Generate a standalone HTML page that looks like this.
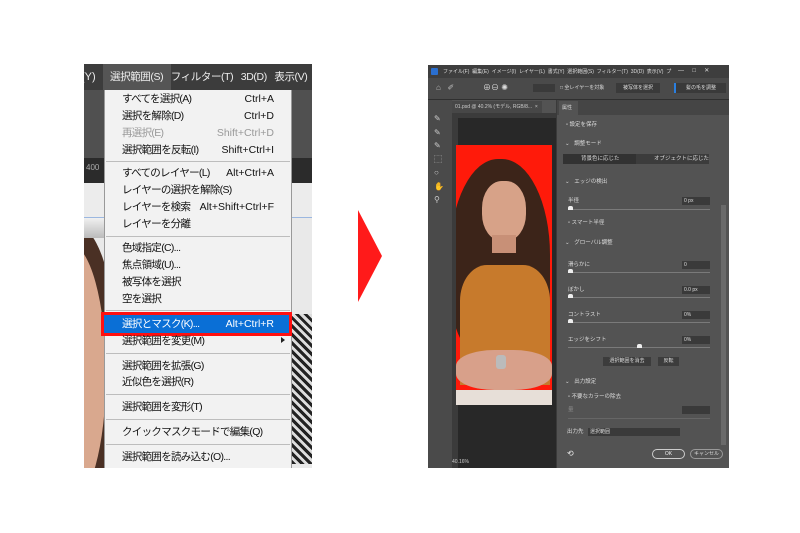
<!DOCTYPE html>
<html><head><meta charset="utf-8"><style>
*{margin:0;padding:0;box-sizing:border-box}
body{width:800px;height:533px;background:#fff;position:relative;overflow:hidden;font-family:"Liberation Sans","Noto Sans CJK JP",sans-serif}
.a{position:absolute}
.mi{position:absolute;left:122px;font-size:10.5px;letter-spacing:-0.7px;color:#111;white-space:nowrap;line-height:13px}
.sc{position:absolute;right:526px;font-size:10.5px;color:#111;white-space:nowrap;line-height:13px}
.sep{position:absolute;left:106px;width:184px;height:1px;background:#bdbdbd}
.t{position:absolute;font-size:5.5px;color:#ddd;white-space:nowrap;line-height:7px}
.fld{position:absolute;background:#3a3a3a;height:8px;font-size:5px;color:#ddd;padding-left:2px;line-height:8px}
.sl{position:absolute;left:568px;width:142px;height:1px;background:#7a7a7a}
.kn{position:absolute;width:5px;height:4px;background:#eee;border-radius:2px 2px 0 0}
</style></head><body>
<!-- LEFT SCREENSHOT -->
<div class="a" style="left:84px;top:64px;width:228px;height:404px;background:#e9e9e9;overflow:hidden">
  <div class="a" style="left:0;top:0;width:228px;height:26px;background:#3c3c3c"></div>
  <div class="a" style="left:0;top:26px;width:228px;height:68px;background:#505050"></div>
  <div class="a" style="left:0;top:94px;width:228px;height:25px;background:#2b2b2b"></div>
  <div class="a" style="left:2px;top:99px;font-size:8px;color:#aaa">400</div>
  <div class="a" style="left:0;top:119px;width:228px;height:34px;background:#ececec"></div>
  <div class="a" style="left:0;top:153px;width:228px;height:1px;background:#9bb7e0"></div>
  <!-- face on left -->
  <div class="a" style="left:-70px;top:160px;width:100px;height:280px;border-radius:45% 40% 30% 30%;background:#4a3024"></div>
  <div class="a" style="left:-50px;top:180px;width:72px;height:260px;border-radius:50%;background:#d9a88e"></div>
  <div class="a" style="left:0;top:154px;width:30px;height:20px;background:linear-gradient(#f0f0f0,#bbb)"></div>
  <div class="a" style="left:208px;top:250px;width:20px;height:150px;background:repeating-linear-gradient(45deg,#222 0 3px,#ddd 3px 6px)"></div>
  <div class="a" style="left:-3px;top:0;font-size:11px;color:#eee;line-height:26px">(Y)</div>
  <div class="a" style="left:19px;top:0;width:68px;height:26px;background:#555"></div>
  <div class="a" style="left:26px;top:0;font-size:10.5px;letter-spacing:-0.4px;color:#eee;line-height:26px;white-space:nowrap">選択範囲(S)&nbsp;&nbsp;&nbsp;フィルター(T)&nbsp;&nbsp;&nbsp;3D(D)&nbsp;&nbsp;&nbsp;表示(V)</div>
</div>
<!-- menu -->
<div class="a" style="left:104px;top:90px;width:188px;height:378px;background:#f2f2f2;border-left:1px solid #999;border-right:1px solid #999"></div>
<div class="mi" style="top:93px">すべてを選択(A)</div><div class="sc" style="top:93px">Ctrl+A</div>
<div class="mi" style="top:110px">選択を解除(D)</div><div class="sc" style="top:110px">Ctrl+D</div>
<div class="mi" style="top:127px;color:#999">再選択(E)</div><div class="sc" style="top:127px;color:#999">Shift+Ctrl+D</div>
<div class="mi" style="top:144px">選択範囲を反転(I)</div><div class="sc" style="top:144px">Shift+Ctrl+I</div>
<div class="sep" style="top:161px"></div>
<div class="mi" style="top:167px">すべてのレイヤー(L)</div><div class="sc" style="top:167px">Alt+Ctrl+A</div>
<div class="mi" style="top:184px">レイヤーの選択を解除(S)</div>
<div class="mi" style="top:201px">レイヤーを検索</div><div class="sc" style="top:201px">Alt+Shift+Ctrl+F</div>
<div class="mi" style="top:218px">レイヤーを分離</div>
<div class="sep" style="top:236px"></div>
<div class="mi" style="top:242px">色域指定(C)...</div>
<div class="mi" style="top:259px">焦点領域(U)...</div>
<div class="mi" style="top:276px">被写体を選択</div>
<div class="mi" style="top:293px">空を選択</div>
<div class="sep" style="top:310px"></div>
<div class="a" style="left:101px;top:312px;width:191px;height:24px;border:3px solid #ff1010;background:#0a6fd6"></div>
<div class="mi" style="top:318px;color:#fff">選択とマスク(K)...</div><div class="sc" style="top:318px;color:#fff">Alt+Ctrl+R</div>
<div class="mi" style="top:335px">選択範囲を変更(M)</div>
<div class="a" style="left:281px;top:337px;width:0;height:0;border-top:3px solid transparent;border-bottom:3px solid transparent;border-left:4px solid #222"></div>
<div class="sep" style="top:353px"></div>
<div class="mi" style="top:360px">選択範囲を拡張(G)</div>
<div class="mi" style="top:376px">近似色を選択(R)</div>
<div class="sep" style="top:394px"></div>
<div class="mi" style="top:401px">選択範囲を変形(T)</div>
<div class="sep" style="top:419px"></div>
<div class="mi" style="top:426px">クイックマスクモードで編集(Q)</div>
<div class="sep" style="top:444px"></div>
<div class="mi" style="top:451px">選択範囲を読み込む(O)...</div>

<!-- ARROW -->
<svg class="a" style="left:356px;top:210px" width="28" height="92"><polygon points="2,0 26,46 2,92" fill="#ff1a1a"/></svg>

<!-- RIGHT SCREENSHOT -->
<div class="a" style="left:428px;top:65px;width:301px;height:403px;background:#535353;overflow:hidden">
  <div class="a" style="left:0;top:0;width:301px;height:13px;background:#3e3e3e"></div>
  <div class="a" style="left:3px;top:3px;width:7px;height:7px;background:#2a6fd0;border-radius:1px"></div>
  <div class="a" style="left:15px;top:3px;font-size:5px;color:#ddd;white-space:nowrap">ファイル(F)&nbsp; 編集(E)&nbsp; イメージ(I)&nbsp; レイヤー(L)&nbsp; 書式(Y)&nbsp; 選択範囲(S)&nbsp; フィルター(T)&nbsp; 3D(D)&nbsp; 表示(V)&nbsp; プ</div>
  <div class="a" style="left:250px;top:2px;font-size:6px;color:#ddd;white-space:nowrap">—&nbsp;&nbsp;&nbsp;&nbsp;&nbsp;□&nbsp;&nbsp;&nbsp;&nbsp;&nbsp;✕</div>
  <div class="a" style="left:0;top:13px;width:301px;height:21px;background:#4a4a4a"></div>
  <div class="a" style="left:8px;top:18px;font-size:8px;color:#bbb">⌂&nbsp;&nbsp;&nbsp;✐</div>
  <div class="a" style="left:55px;top:17px;font-size:8px;color:#ddd">⊕⊖ ✺</div>
  <div class="a" style="left:105px;top:19px;width:22px;height:8px;background:#3a3a3a"></div>
  <div class="a" style="left:132px;top:19px;font-size:5px;color:#ddd">□ 全レイヤーを対象</div>
  <div class="a" style="left:188px;top:18px;width:44px;height:10px;background:#3a3a3a;font-size:5px;color:#ddd;text-align:center;line-height:10px">被写体を選択</div>
  <div class="a" style="left:246px;top:18px;width:52px;height:10px;background:#3a3a3a;border-left:2px solid #2a7fe0;font-size:5px;color:#ddd;text-align:center;line-height:10px">髪の毛を調整</div>
  <div class="a" style="left:0;top:34px;width:301px;height:1px;background:#2f2f2f"></div>
  <div class="a" style="left:24px;top:36px;width:90px;height:12px;background:#474747;font-size:5px;color:#ccc;padding-left:3px;line-height:12px">01.psd @ 40.2% (モデル, RGB/8...&nbsp;&nbsp;×</div>
  <div class="a" style="left:0;top:35px;width:24px;height:368px;background:#4a4a4a"></div>
  <div class="a" style="left:6px;top:47px;font-size:8px;color:#ccc;line-height:13.5px">✎<br>✎<br>✎<br>⬚<br>○<br>✋<br>⚲</div>
  <div class="a" style="left:24px;top:48px;width:104px;height:355px;background:#282828"></div>
  <div class="a" style="left:24px;top:48px;width:104px;height:5px;background:#3b3b3b"></div>
  <div class="a" style="left:24px;top:48px;width:6px;height:355px;background:#3b3b3b"></div>
  <div class="a" style="left:28px;top:80px;width:96px;height:260px;background:#ff1a0a;overflow:hidden">
    <div class="a" style="left:-6px;top:14px;width:100px;height:200px;border-radius:48% 48% 35% 35%;background:#3c2419"></div>
    <div class="a" style="left:26px;top:36px;width:44px;height:60px;border-radius:45%;background:#d7a288"></div>
    <div class="a" style="left:36px;top:90px;width:24px;height:18px;background:#c89077"></div>
    <div class="a" style="left:4px;top:120px;width:90px;height:120px;border-radius:30% 30% 0 0;background:#c77a2c"></div>
    <div class="a" style="left:0;top:205px;width:96px;height:40px;background:#d8a08a;border-radius:40%"></div>
    <div class="a" style="left:40px;top:210px;width:10px;height:14px;background:#bbb;border-radius:3px"></div>
    <div class="a" style="left:0;top:245px;width:96px;height:15px;background:#e7dfd8"></div>
  </div>
  <div class="a" style="left:24px;top:394px;font-size:5px;color:#ccc">40.16%</div>
  <div class="a" style="left:128px;top:35px;width:173px;height:368px;background:#535353;border-left:1px solid #3a3a3a"></div>
  <div class="a" style="left:129px;top:35px;width:172px;height:15px;background:#454545"></div>
  <div class="a" style="left:131px;top:36px;width:19px;height:14px;background:#535353;font-size:5px;color:#ddd;line-height:14px;padding-left:3px">属性</div>
  <div class="a" style="left:293px;top:140px;width:5px;height:240px;background:#6a6a6a"></div>
</div>
<div class="t" style="left:566px;top:122px">▫ 設定を保存</div>
<div class="t" style="left:565px;top:141px">⌄&nbsp;&nbsp; 調整モード</div>
<div class="a" style="left:563px;top:154px;width:146px;height:10px;background:#3c3c3c"></div>
<div class="a" style="left:563px;top:154px;width:73px;height:10px;background:#323232"></div>
<div class="t" style="left:581px;top:156px">背景色に応じた</div>
<div class="t" style="left:654px;top:156px">オブジェクトに応じた</div>
<div class="t" style="left:565px;top:179px">⌄&nbsp;&nbsp; エッジの検出</div>
<div class="t" style="left:568px;top:198px">半径</div><div class="fld" style="left:682px;top:197px;width:28px">0 px</div>
<div class="sl" style="top:209px"></div><div class="kn" style="left:568px;top:206px"></div>
<div class="t" style="left:568px;top:220px">▫ スマート半径</div>
<div class="t" style="left:565px;top:240px">⌄&nbsp;&nbsp; グローバル調整</div>
<div class="t" style="left:568px;top:262px">滑らかに</div><div class="fld" style="left:682px;top:261px;width:28px">0</div>
<div class="sl" style="top:272px"></div><div class="kn" style="left:568px;top:269px"></div>
<div class="t" style="left:568px;top:287px">ぼかし</div><div class="fld" style="left:682px;top:286px;width:28px">0.0 px</div>
<div class="sl" style="top:297px"></div><div class="kn" style="left:568px;top:294px"></div>
<div class="t" style="left:568px;top:312px">コントラスト</div><div class="fld" style="left:682px;top:311px;width:28px">0%</div>
<div class="sl" style="top:322px"></div><div class="kn" style="left:568px;top:319px"></div>
<div class="t" style="left:568px;top:337px">エッジをシフト</div><div class="fld" style="left:682px;top:336px;width:28px">0%</div>
<div class="sl" style="top:347px"></div><div class="kn" style="left:637px;top:344px"></div>
<div class="a" style="left:603px;top:357px;width:48px;height:9px;background:#3c3c3c;font-size:5px;color:#ddd;text-align:center;line-height:9px">選択範囲を消去</div>
<div class="a" style="left:658px;top:357px;width:21px;height:9px;background:#3c3c3c;font-size:5px;color:#ddd;text-align:center;line-height:9px">反転</div>
<div class="t" style="left:565px;top:379px">⌄&nbsp;&nbsp; 出力設定</div>
<div class="t" style="left:568px;top:394px">▫ 不要なカラーの除去</div>
<div class="t" style="left:568px;top:407px;color:#888">量</div><div class="fld" style="left:682px;top:406px;width:28px"></div>
<div class="sl" style="top:418px;background:#666"></div>
<div class="t" style="left:567px;top:429px">出力先</div>
<div class="fld" style="left:588px;top:428px;width:92px">選択範囲</div>
<div class="a" style="left:567px;top:449px;font-size:8px;color:#eee">⟲</div>
<div class="a" style="left:652px;top:449px;width:33px;height:10px;border:1px solid #ccc;border-radius:5px;font-size:5px;color:#eee;text-align:center;line-height:8px">OK</div>
<div class="a" style="left:690px;top:449px;width:33px;height:10px;border:1px solid #999;border-radius:5px;font-size:5px;color:#ddd;text-align:center;line-height:8px">キャンセル</div>
</body></html>
